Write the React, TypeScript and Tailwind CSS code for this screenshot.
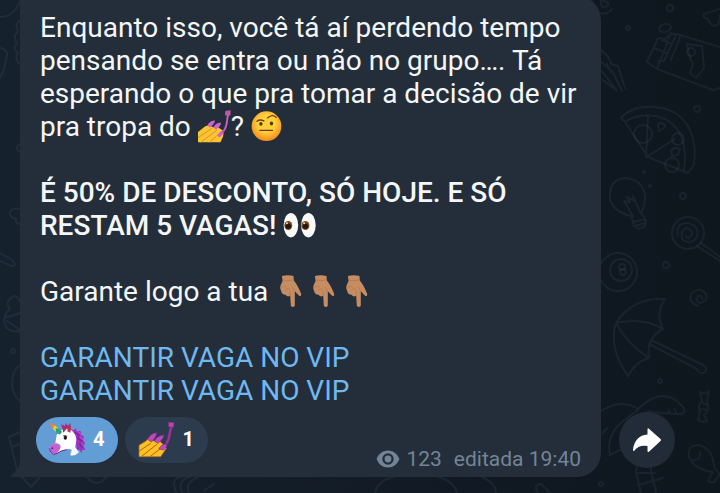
import React, { useState } from 'react';
import { clsx } from 'clsx';

interface IconProps {
  className?: string;
}

const NailPolish: React.FC<IconProps> = ({ className }) => (
  <svg viewBox="0 0 100 100" className={className} role="img" aria-label="unhas">
    <path d="M0 98V67L22 49L34 46L46 52L58 50L67 57L78 64L76 80L68 98Z" fill="#fcc433" />
    <path d="M0 84L43 55M8 98L56 62M34 98L64 72" stroke="#d8951f" strokeWidth="3" fill="none" />
    <path d="M28 47C32 39 41 32 51 32C52 37 45 47 36 53Z" fill="#cf63cd" />
    <path d="M46 53C50 44 60 37 70 39C70 46 62 54 55 60Z" fill="#cf63cd" />
    <path d="M59 78C63 68 70 62 78 62C79 70 72 78 65 83Z" fill="#cf63cd" />
    <path d="M91 15C86 34 90 52 74 68" stroke="#b04db0" strokeWidth="6" fill="none" />
    <path d="M91 15C87 34 89 51 78 63" stroke="#d86cd0" strokeWidth="3" fill="none" />
    <path d="M83 3L99 1L98 17L82 17Z" fill="#c655a7" />
  </svg>
);

const RaisedBrowFace: React.FC<IconProps> = ({ className }) => (
  <svg viewBox="0 0 100 100" className={className} role="img" aria-label="sobrancelha levantada">
    <defs>
      <radialGradient id="face" cx="50%" cy="40%" r="58%">
        <stop offset="0.5" stopColor="#ffd03b" />
        <stop offset="1" stopColor="#f28f1f" />
      </radialGradient>
    </defs>
    <circle cx="47" cy="49" r="45" fill="url(#face)" />
    <path d="M18 34Q27 27 39 33M50 24Q64 11 76 22" stroke="#6b3d13" strokeWidth="4" fill="none" strokeLinecap="round" />
    <ellipse cx="30" cy="42" rx="5" ry="6" fill="#58310f" />
    <ellipse cx="62" cy="41" rx="5" ry="6" fill="#58310f" />
    <path d="M27 62H65" stroke="#6b3d13" strokeWidth="4" strokeLinecap="round" />
  </svg>
);

const Eyes: React.FC<IconProps> = ({ className }) => (
  <svg viewBox="0 0 100 100" className={className} role="img" aria-label="olhos">
    <ellipse cx="24" cy="49" rx="22" ry="37" fill="#fafafa" />
    <ellipse cx="77" cy="49" rx="22" ry="37" fill="#fafafa" />
    <ellipse cx="16" cy="50" rx="12" ry="14" fill="#7a4a1c" />
    <ellipse cx="68" cy="50" rx="12" ry="14" fill="#7a4a1c" />
    <circle cx="16" cy="52" r="8" fill="#24140a" />
    <circle cx="68" cy="52" r="8" fill="#24140a" />
    <circle cx="12" cy="43" r="3" fill="#f3d9b0" />
    <circle cx="64" cy="43" r="3" fill="#f3d9b0" />
  </svg>
);

const PointDown: React.FC<IconProps> = ({ className }) => (
  <svg viewBox="0 0 100 100" className={className} role="img" aria-label="apontando para baixo">
    <path
      d="M21 3Q38 -1 56 3L57 17Q68 30 79 56Q81 66 73 63L60 49L60 93Q54 101 48 93L46 63Q38 69 32 60Q20 59 19 49Q14 42 17 31L23 18Z"
      fill="#c68d62"
    />
    <path d="M22 15Q40 21 56 14M20 38Q28 29 35 37M31 46Q38 37 45 45" stroke="#a9734a" strokeWidth="2" fill="none" />
    <path d="M46 63V48M60 49L51 35" stroke="#a9734a" strokeWidth="2" fill="none" />
  </svg>
);

const Unicorn: React.FC<IconProps> = ({ className }) => (
  <svg viewBox="84 63 114 114" className={className} aria-hidden="true">
    <path d="M152 88L161 91L168 85L170 93L182 93L184 104L192 110L189 121L195 129L191 139L196 150L187 149L184 159L177 148L171 151L168 128L152 108Z" fill="#a12fc0" />
    <path d="M164 97L178 106L173 116L185 122L179 133L187 143" stroke="#65208d" strokeWidth="3" fill="none" />
    <path d="M170 91L185 105M179 110L191 120M181 126L192 137" stroke="#cd58db" strokeWidth="3" fill="none" />
    <path d="M119 94Q137 77 154 91Q169 102 169 123L165 142L177 157Q167 168 152 166L155 149Q145 145 136 149L122 154L103 164Q88 161 88 144Q91 136 106 130L110 105Z" fill="#fff" />
    <path d="M105 130Q118 128 122 139Q120 154 106 162Q89 163 88 144Q91 135 105 130Z" fill="#c464d4" />
    <path d="M88 145Q89 158 101 164Q115 160 124 153L140 149" stroke="#6f2494" strokeWidth="3" fill="none" />
    <circle cx="97" cy="145" r="3" fill="#68228b" />
    <path d="M88 71L93 68L106 78L100 88Z" fill="#e8862e" />
    <path d="M103 76L115 84L108 96L99 87Z" fill="#f0cf39" />
    <path d="M107 84L116 86L127 95L119 104L108 97Z" fill="#27a770" />
    <path d="M124 73L135 78L138 69L144 78L151 69L153 91L140 86L130 98Z" fill="#a62c76" />
    <path d="M143 83L153 77L151 98L142 94Z" fill="#b9305b" />
    <path d="M129 108Q134 103 142 109" stroke="#222" strokeWidth="2" fill="none" />
    <ellipse cx="136" cy="113" rx="5" ry="6" fill="#24131f" />
    <path d="M153 153L151 166L160 167" stroke="#c8cad8" strokeWidth="2" fill="none" />
  </svg>
);

const NailPolishReaction: React.FC<IconProps> = ({ className }) => (
  <svg viewBox="351 63 114 114" className={className} aria-hidden="true">
    <path d="M357 170V136L378 123L388 112L402 124L412 116L427 131L439 145L422 170Z" fill="#fdbf22" stroke="#a86819" strokeWidth="2" />
    <path d="M358 153L392 130M366 168L412 132M391 169L424 144" stroke="#a86819" strokeWidth="3" fill="none" />
    <path d="M384 119Q389 101 410 98Q409 112 394 126Z" fill="#be48bd" stroke="#8d2b91" strokeWidth="2" />
    <path d="M404 124Q409 108 432 105Q429 119 414 130Z" fill="#be48bd" stroke="#8d2b91" strokeWidth="2" />
    <path d="M417 147Q421 134 438 132Q445 136 431 150Z" fill="#be48bd" stroke="#8d2b91" strokeWidth="2" />
    <path d="M454 80C446 98 452 113 438 132" stroke="#8d2b91" strokeWidth="8" fill="none" />
    <path d="M454 80C448 98 451 113 440 130" stroke="#a93aa6" strokeWidth="3" fill="none" />
    <path d="M446 67L462 68L460 82L446 80Z" fill="#bb45ae" stroke="#8d2b91" strokeWidth="2" />
  </svg>
);

const ViewsIcon: React.FC<IconProps> = ({ className }) => (
  <svg viewBox="0 0 24 24" className={className} aria-hidden="true" fill="currentColor">
    <path
      fillRule="evenodd"
      d="M12 3.500C6.800 3.500 2.500 7 .6 12c1.900 5 6.200 8.500 11.400 8.500S21.500 17 23.400 12C21.500 7 17.200 3.500 12 3.500Zm0 14.200a5.700 5.700 0 1 1 0-11.400 5.700 5.700 0 0 1 0 11.400Zm0-2.300a3.400 3.400 0 1 0 0-6.800 3.400 3.400 0 0 0 0 6.800Z"
    />
  </svg>
);

// chat wallpaper line art
const Wallpaper: React.FC = () => (
  <svg
    viewBox="0 0 720 493"
    preserveAspectRatio="xMidYMid slice"
    className="absolute inset-0 h-full w-full text-[#7b93a5]/10"
    fill="none"
    stroke="currentColor"
    strokeWidth="2"
    strokeLinecap="round"
    strokeLinejoin="round"
    aria-hidden="true"
  >
    {/* left edge */}
    <path d="M0 17Q14 17 20 1M20 20Q14 25 18 31Q12 37 17 43Q12 49 18 53Q14 60 20 64M0 48Q10 50 6 60Q4 72 0 78M20 144Q13 148 20 152" />
    <path d="M20 209Q9 207 10 214Q11 219 16 218Q15 224 20 224M0 253L12 260Q18 266 11 266L0 261" />
    <path d="M20 302Q16 292 10 299Q5 304 10 309Q2 316 5 325Q9 333 20 331M5 318L20 313M7 321L20 330M20 365Q12 370 12 383Q12 395 20 401M20 432L9 437L17 470M12 447L20 444" />
    <circle cx="13" cy="351" r="2" />
    {/* bottom edge */}
    <path d="M22 477L31 487L40 477M87 477Q97 489 106 477M177 493Q169 478 182 477M182 493Q177 480 190 477M189 493Q184 483 198 477" />
    <path d="M375 493Q378 480 394 477M438 477Q454 481 457 493M482 477Q496 483 496 493M538 493Q533 484 541 484L550 493M205 490L214 484" />
    {/* swirl, bone and dots */}
    <path d="M592 1V8M601 0Q600 9 606 7Q612 2 603 1M600 13Q608 15 612 9M720 9Q710 12 704 14Q702 18 708 19Q711 28 717 25Q720 22 720 15" />
    <ellipse cx="665" cy="28" rx="6" ry="4" transform="rotate(-15 665 28)" />
    <circle cx="670" cy="8" r="3" />
    <circle cx="628" cy="28" r="2" />
    <circle cx="697" cy="109" r="3" />
    {/* snack packet */}
    <path d="M720 47L680 35Q671 32 665 39L658 38L647 62L657 69L713 90L720 88M671 33L657 69M676 35L664 61L658 61M680 37L671 60M654 48L666 53M662 40L672 44M702 46L687 44L690 58L693 64L690 73L696 78L704 68Z" />
    <circle cx="691" cy="52" r="4" />
    {/* hand */}
    <path d="M601 50Q610 57 611 64L618 66L625 88M601 62L613 72L622 91M602 71L617 91M603 80L613 88M607 64L611 72" />
    {/* pizza slice */}
    <path d="M621 118Q632 105 655 107Q679 109 689 128Q697 144 694 165L688 173L648 157L625 122ZM625 122Q638 113 656 116Q674 120 681 136Q687 151 684 171M648 116L646 157L675 139" />
    <circle cx="643" cy="134" r="9" />
    <circle cx="678" cy="139" r="6" />
    <circle cx="672" cy="165" r="7" />
    <path d="M658 126Q659 121 663 124Q667 124 664 128L659 131ZM671 151Q674 146 680 149L678 155L672 156Z" />
    {/* light bulb */}
    <path d="M633 222L631 216Q612 211 610 198Q609 179 626 178Q643 180 645 196Q645 207 641 213L646 220L645 226L639 229L634 226ZM633 222L645 219M635 226L645 223M633 216L624 201L630 202L627 197L635 201L633 196L641 214" />
    <circle cx="683" cy="196" r="3" />
    <circle cx="644" cy="172" r="1" />
    <circle cx="650" cy="186" r="1" />
    {/* lollipop */}
    <circle cx="688" cy="233" r="16" />
    <path d="M678 236Q675 223 688 223Q700 226 697 237Q691 246 683 240Q679 231 687 228Q694 230 691 236Q688 240 686 236M701 243L720 257M697 246L720 261" />
    {/* billiard ball */}
    <circle cx="618" cy="272" r="19" />
    <circle cx="621" cy="270" r="11" />
    <circle cx="622" cy="267" r="3" />
    <circle cx="623" cy="272" r="3" />
    <circle cx="666" cy="265" r="3" />
    <path d="M698 306Q687 302 692 293Q700 286 706 294Q709 301 700 303Q694 301 698 296Q702 295 702 299" />
    {/* umbrella */}
    <path d="M616 323Q633 297 665 299Q655 313 663 329M616 323Q643 317 663 329Q646 338 649 358Q626 343 616 323ZM616 323Q608 347 628 376Q636 361 649 358M651 340L701 364Q709 367 705 372Q701 375 697 370M649 344L697 369" />
    <circle cx="660" cy="381" r="2" />
    {/* palm tree */}
    <path d="M601 411Q621 398 638 409Q664 384 683 407Q687 413 680 414Q665 414 648 411M610 454Q606 435 622 422L638 410M610 455L622 449M602 434L607 428M631 421Q643 448 636 472L641 493M651 420Q652 450 651 472L656 492M636 473L655 473M638 485L663 478M669 413L669 410M676 412L674 409" />
    <circle cx="601" cy="484" r="2" />
    {/* candy and fish */}
    <path d="M700 392L705 394L709 391L707 401Q711 410 704 415L707 421L702 422L698 420L700 412Q697 406 702 401ZM701 402L707 405M699 409L706 410" />
    <path d="M713 472Q695 470 689 457Q687 445 698 445Q713 448 714 467L720 475M713 472L708 481Q714 485 717 478L720 474M692 460Q701 461 700 452" />
  </svg>
);

const emoji = 'inline-block size-[33px] align-top';

interface ReactionProps {
  icon: React.ReactNode;
  label: string;
  count: number;
  initial?: boolean;
}

const Reaction: React.FC<ReactionProps> = ({ icon, label, count, initial = false }) => {
  const [active, setActive] = useState(initial);
  const total = count + (active ? 1 : 0) - (initial ? 1 : 0);

  return (
    <button
      type="button"
      aria-label={`${label} ${total}`}
      aria-pressed={active}
      onClick={() => setActive(!active)}
      className={clsx(
        'flex h-[46px] items-center gap-[7px] rounded-full pr-3.5 pl-3 text-xl font-bold text-white',
        active ? 'bg-[#639dd5]' : 'bg-[#2c3c4e]'
      )}
    >
      {icon}
      <span className="-mt-0.5">{total}</span>
    </button>
  );
};

export default function App() {
  return (
    <main className="relative isolate min-h-screen overflow-hidden bg-linear-to-r from-[#16212e] to-[#0e161e] font-[Roboto,sans-serif]">
      <Wallpaper />
      <div className="relative -mt-1 flex items-end gap-[18px] pr-[45px] pb-4 pl-5">
        <article className="relative min-w-0 flex-1 rounded-tl-lg rounded-r-3xl bg-[#232e3a] px-4 pt-[15px] pb-1.5">
          <svg viewBox="0 0 12 16" className="absolute bottom-0 -left-2.5 h-4 w-3" aria-hidden="true">
            <path d="M12 0H10Q9 9 1 14Q0 16 3 16H12Z" fill="#232e3a" />
          </svg>

          <div className="px-1 text-[28px] leading-[33px] text-[#f4f6f8]">
            <p>
              Enquanto isso, você tá aí perdendo tempo
              <br />
              pensando se entra ou não no grupo…. Tá
              <br />
              esperando o que pra tomar a decisão de vir
              <br />
              pra tropa do <NailPolish className={emoji} />? <RaisedBrowFace className={emoji} />
            </p>
            <p className="mt-[33px] font-medium">
              É 50% DE DESCONTO, SÓ HOJE. E SÓ
              <br />
              RESTAM 5 VAGAS! <Eyes className={emoji} />
            </p>
            <p className="mt-[33px]">
              Garante logo a tua <PointDown className={emoji} />
              <PointDown className={emoji} />
              <PointDown className={emoji} />
            </p>
            <p className="mt-[33px] text-[#70b8f1]">
              <a href="#vip">GARANTIR VAGA NO VIP</a>
              <br />
              <a href="#vip">GARANTIR VAGA NO VIP</a>
            </p>
          </div>

          <footer className="mt-2.5 flex items-end justify-between">
            <div className="mb-2 flex gap-[7px]">
              <Reaction icon={<Unicorn className="size-[38px]" />} label="Unicórnio" count={4} initial />
              <Reaction icon={<NailPolishReaction className="size-[38px]" />} label="Unhas" count={1} />
            </div>
            <div className="flex items-center pr-1 text-[21px] leading-6 text-[#738496]">
              <ViewsIcon className="mr-1.5 size-6" />
              <span className="mr-3">123</span>
              <span>
                editada <time>19:40</time>
              </span>
            </div>
          </footer>
        </article>

        <button
          type="button"
          aria-label="Encaminhar"
          className="mb-[9px] flex size-14 shrink-0 items-center justify-center rounded-full bg-[#232f3b]/90 text-white"
        >
          <svg viewBox="0 0 28 24" className="h-6 w-7" fill="currentColor" aria-hidden="true">
            <path d="M14.500 1.500Q14.500-.5 16.200 1L27.500 11Q28.500 12 27.500 13L16.200 23.500Q14.500 25 14.500 22.500V18Q5.500 16.500 1.500 22.500Q0 24 0 21.500C1 13 6 7 14.500 6.500Z" />
          </svg>
        </button>
      </div>
    </main>
  );
}
